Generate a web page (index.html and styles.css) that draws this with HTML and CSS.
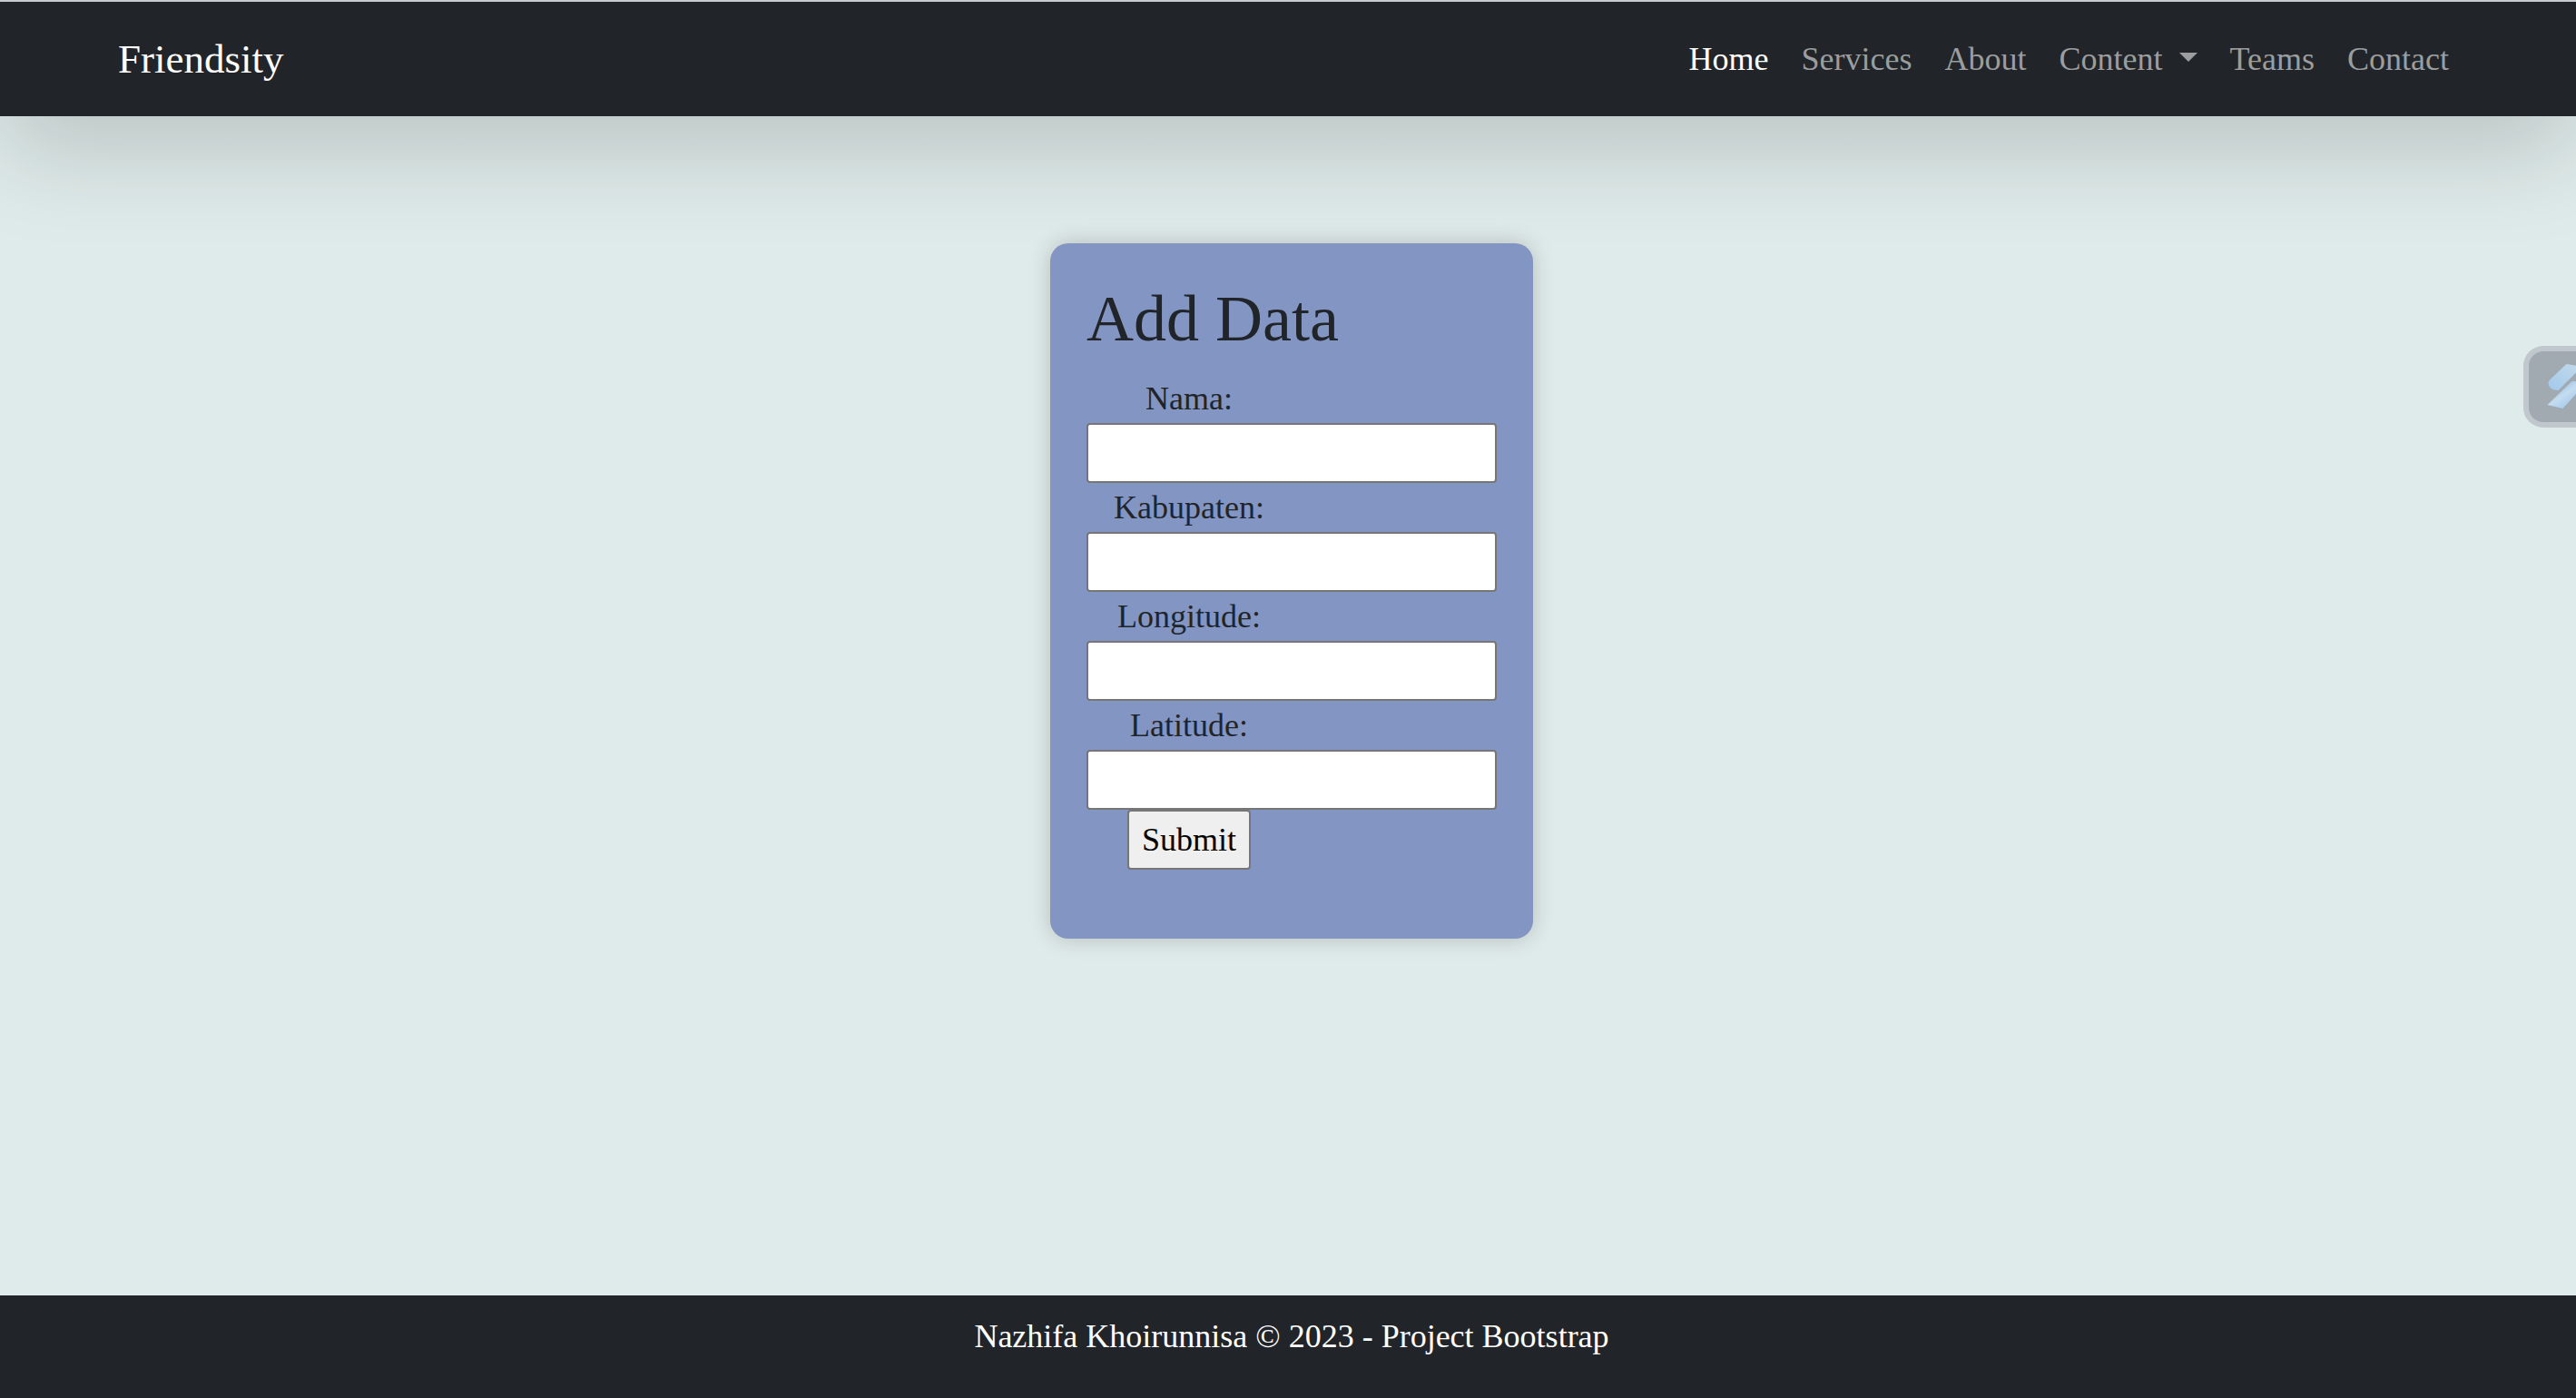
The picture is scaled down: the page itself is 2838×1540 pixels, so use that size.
FILE: index.html
```html
<!DOCTYPE html>
<html lang="id">
<head>
  <meta charset="utf-8">
  <meta name="viewport" content="width=device-width, initial-scale=1">
  <title>Friendsity</title>
  <link rel="stylesheet" href="styles.css">
</head>
<body>
  <header class="navbar">
    <a class="brand" href="#">Friendsity</a>
    <nav class="nav">
      <a class="nav-link active" href="#">Home</a>
      <a class="nav-link" href="#">Services</a>
      <a class="nav-link" href="#">About</a>
      <a class="nav-link dropdown" href="#">Content </a>
      <a class="nav-link" href="#">Teams</a>
      <a class="nav-link" href="#">Contact</a>
    </nav>
  </header>

  <main class="main">
    <form class="card">
      <h1 class="title">Add Data</h1>
      <label class="label" for="nama">Nama:</label>
      <input class="field" type="text" id="nama">
      <label class="label" for="kabupaten">Kabupaten:</label>
      <input class="field" type="text" id="kabupaten">
      <label class="label" for="longitude">Longitude:</label>
      <input class="field" type="text" id="longitude">
      <label class="label" for="latitude">Latitude:</label>
      <input class="field" type="text" id="latitude">
      <div class="actions">
        <button class="submit" type="submit">Submit</button>
      </div>
    </form>
  </main>

  <footer class="footer">Nazhifa Khoirunnisa © 2023 - Project Bootstrap</footer>

  <button class="side-tab" type="button" aria-label="Assistant">
    <svg class="side-icon" viewBox="0 0 51 78" aria-hidden="true">
      <defs>
        <linearGradient id="upper" x1="1" y1="0" x2="0" y2="1">
          <stop offset="0" stop-color="#c3daea"/>
          <stop offset="1" stop-color="#a3c9ec"/>
        </linearGradient>
        <linearGradient id="lower" x1="0" y1="0" x2="1" y2="1">
          <stop offset="0.3" stop-color="#a9ccec"/>
          <stop offset="0.45" stop-color="#c5dcee"/>
          <stop offset="0.7" stop-color="#a8cdee"/>
        </linearGradient>
      </defs>
      <path fill="url(#upper)" d="M41 14L58 17L32 43Q21 43 21 34Q21 33 23 31Z"/>
      <path fill="url(#lower)" d="M47 33H64L37 63L20 59Z"/>
    </svg>
  </button>
</body>
</html>
```

FILE: styles.css
```css
* {
  box-sizing: border-box;
}

body {
  display: flex;
  flex-direction: column;
  min-height: 100vh;
  margin: 0;
  overflow-x: hidden;
  background: #dfebea;
  color: #212529;
  font-family: "Liberation Serif", "Times New Roman", serif;
  font-size: 36px;
  line-height: 54px;
}

.navbar {
  display: flex;
  align-items: center;
  justify-content: space-between;
  height: 128px;
  padding: 0 122px 0 130px;
  border-top: 2px solid #c8cccf;
  background: #212529;
  box-shadow: 0 36px 108px rgba(0, 0, 0, 0.175);
}

.brand {
  color: #fff;
  font-size: 45px;
  text-decoration: none;
}

.nav {
  display: flex;
}

.nav-link {
  padding: 0 18px;
  color: #9b9d9e;
  text-decoration: none;
}

.active {
  color: #fff;
}

.dropdown {
  white-space: pre;
}

.dropdown::after {
  content: "";
  display: inline-block;
  margin-left: 9px;
  border: 10px solid transparent;
  border-top-color: currentColor;
  border-bottom: 0;
  vertical-align: 9px;
}

.main {
  display: flex;
  flex: 1;
  align-items: flex-start;
  justify-content: center;
  padding: 140px 0 140px 8px;
}

.card {
  display: flex;
  flex-direction: column;
  width: 532px;
  padding: 40px 40px 76px;
  border-radius: 20px;
  background: #8295c3;
  box-shadow: 0 0 24px rgba(0, 0, 0, 0.2);
}

.title {
  margin: 0 0 18px;
  font-size: 72px;
  font-weight: 400;
  line-height: 86px;
}

.label,
.actions {
  width: 226px;
  text-align: center;
}

.field {
  height: 66px;
  padding: 2px 8px;
  border: 2px solid #767676;
  border-radius: 4px;
  background: #fff;
  font: inherit;
}

.submit {
  display: block;
  height: 66px;
  margin: 0 auto;
  padding: 0 14px;
  border: 2px solid #767676;
  border-radius: 4px;
  background: #efefef;
  color: #000;
  font: inherit;
}

.footer {
  padding: 18px 0 41px 8px;
  background: #212529;
  color: #fff;
  text-align: center;
}

.side-tab {
  position: fixed;
  top: 381px;
  right: 0;
  width: 58px;
  height: 90px;
  padding: 0;
  border: 6px solid #c0c8ce;
  border-right: 0;
  border-radius: 22px 0 0 22px;
  background: #a0aab0;
  overflow: hidden;
}

.side-icon {
  display: block;
  width: 100%;
  height: 100%;
}
```
